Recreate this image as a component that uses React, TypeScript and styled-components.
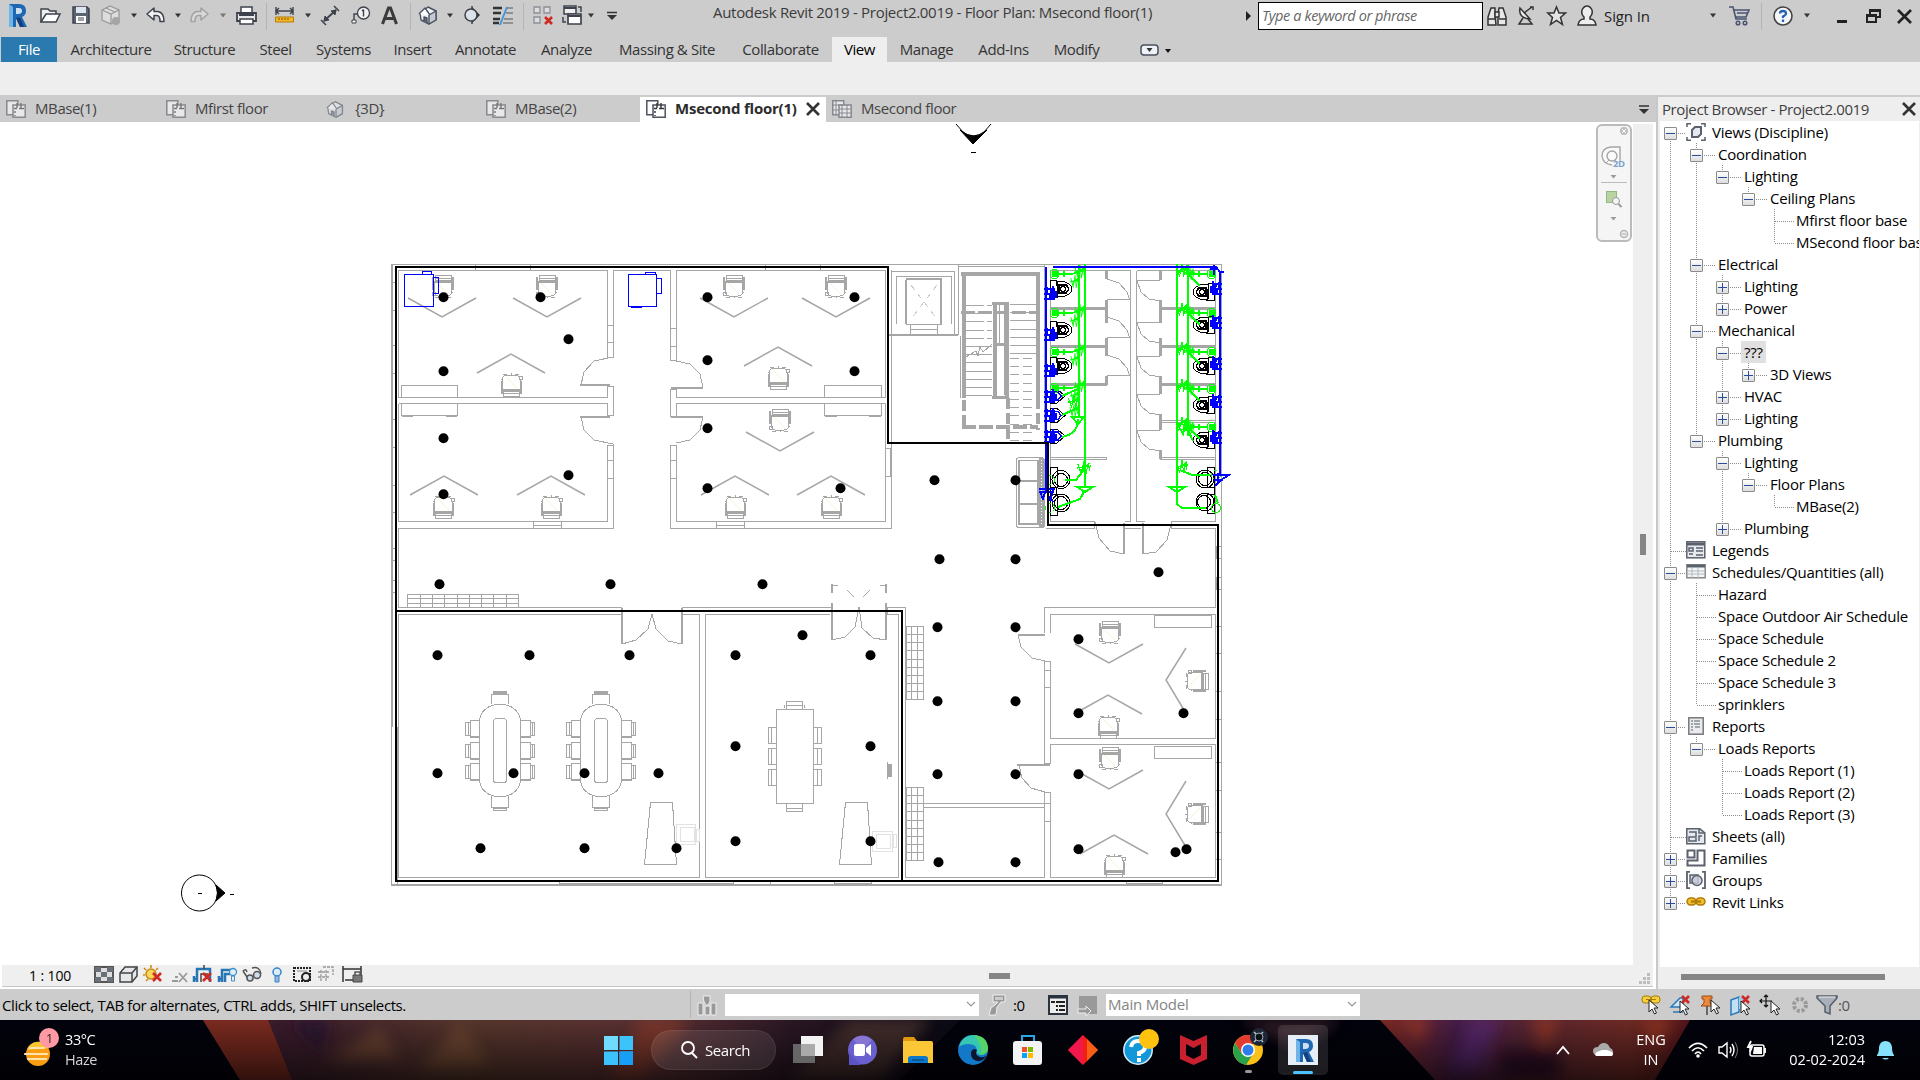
import React from "react";
import styled, { createGlobalStyle } from "styled-components";

const Global = createGlobalStyle`
  * { box-sizing: border-box; }
  html, body { margin: 0; padding: 0; overflow: hidden; }
  body { font-family: "Open Sans", "Noto Sans", sans-serif; font-size: 15px; letter-spacing: -0.4px; color: #333; }
  svg { display: block; flex: none; }
`;

/* ---------- layout ---------- */
const Screen = styled.div`
  width: 1920px; height: 1080px; display: flex; flex-direction: column; overflow: hidden; background: #fff;
`;
const TitleBar = styled.header`
  height: 37px; flex: none; background: #ccc; display: flex; align-items: flex-start; padding: 3px 0 0 8px;
`;
const Slot = styled.span<{ $g?: number }>`
  display: flex; flex: none; margin-left: ${(p) => p.$g || 0}px;
`;
const Sep = styled.i<{ $g?: number }>`
  flex: none; width: 1px; height: 27px; background: #b4b4b4; margin-left: ${(p) => p.$g || 0}px;
`;
const Title = styled.div`
  width: 440px; margin: -1px 0 0 96px; line-height: 20px; white-space: nowrap; flex: none; color: #3b3b3b;
  letter-spacing: -0.3px;
`;
const Search = styled.div`
  width: 225px; height: 28px; margin: -1px 0 0 7px; border: 1px solid #000; background: #fff; padding-left: 3px;
  font-style: italic; line-height: 26px; color: #666; flex: none; font-size: 14.5px;
`;
const SignIn = styled.div`
  width: 46px; margin-left: 7px; line-height: 27px; white-space: nowrap; color: #222; flex: none; letter-spacing: -0.1px;
`;
const RibbonTabs = styled.nav`
  height: 25px; flex: none; background: #ccc; display: flex; padding-left: 1px;
`;
const RibbonTab = styled.div<{ $w: number; $kind?: "file" | "on" }>`
  width: ${(p) => p.$w}px; flex: none; text-align: center; line-height: 24px; white-space: nowrap;
  margin-right: ${(p) => (p.$kind === "file" ? 2 : 0)}px;
  background: ${(p) => (p.$kind === "file" ? "#2a7ab0" : p.$kind === "on" ? "#eee" : "none")};
  color: ${(p) => (p.$kind === "file" ? "#fff" : p.$kind === "on" ? "#000" : "#333")};
`;
const RibbonPanel = styled.div`height: 33px; flex: none; background: #eee;`;
const Work = styled.div`height: 894px; flex: none; display: flex;`;
const Left = styled.main`width: 1656px; flex: none; display: flex; flex-direction: column;`;
const DocTabs = styled.div`height: 27px; flex: none; background: #ccc; display: flex; padding-top: 2px;`;
const DocTab = styled.div<{ $w: number; $on?: boolean }>`
  width: ${(p) => p.$w}px; flex: none; display: flex; align-items: center; padding: 0 6px 2px; gap: 9px; line-height: 23px;
  background: ${(p) => (p.$on ? "#fff" : "none")}; font-weight: ${(p) => (p.$on ? 700 : 400)}; white-space: nowrap;
  color: ${(p) => (p.$on ? "#2c2c2c" : "#444")};
  letter-spacing: ${(p) => (p.$on ? -0.22 : -0.4)}px;
`;
const Spacer = styled.div`flex: 1;`;
const CanvasRow = styled.div`height: 843px; flex: none; display: flex;`;
const Sheet = styled.div`width: 1633px; flex: none; background: #fff;`;
const VTrack = styled.div`width: 20px; flex: none; margin-top: 2px; background: #efefef; padding: 410px 0 0 7px;`;
const VThumb = styled.div`width: 6px; height: 21px; background: #858585;`;
const ViewBar = styled.div`
  height: 22px; margin: 0 3px 0 2px; flex: none; background: #efefef; border-bottom: 1px solid #c6c6c6; display: flex;
  color: #000; line-height: 21px; padding-left: 27px;
`;
const Scale = styled.div`width: 65px; flex: none; font-size: 14px; white-space: nowrap; letter-spacing: -0.1px;`;
const HThumb = styled.div<{ $w: number; $x: number; $y: number }>`
  width: ${(p) => p.$w}px; height: 6px; background: #858585; margin: ${(p) => p.$y}px 0 0 ${(p) => p.$x}px; flex: none;
`;
const Browser = styled.aside`
  width: 264px; flex: none; display: flex; flex-direction: column; border-left: 2px solid #c8c8c8; background: #eee;
`;
const BrowserHead = styled.div`
  height: 26px; flex: none; border-top: 2px solid #ccc; display: flex; justify-content: space-between; align-items: center;
  padding: 0 4px 1px 4px; color: #3f3f3f;
`;
const Tree = styled.div`
  height: 846px; flex: none; margin: 0 1px 0 2px; background: #fff; padding-left: 4px; overflow: hidden;
  color: #000; letter-spacing: -0.22px;
`;
const TreeRow = styled.div`height: 22px; display: flex; align-items: center; white-space: nowrap;`;
const Guide = styled.span<{ $line?: "full" | "top" | "bottom" | "none" }>`
  width: 26px; height: 22px; flex: none; display: flex; align-items: center; margin-right: 0;
  background: repeating-linear-gradient(to bottom, #8c8c8c 0 1px, transparent 1px 2px) no-repeat;
  background-size: ${(p) => (p.$line === "none" ? "0 0" : p.$line === "full" ? "1px 22px" : "1px 12px")};
  background-position: 6px ${(p) => (p.$line === "bottom" ? "10px" : "0")};
`;
const Box = styled.span`
  width: 13px; height: 13px; flex: none; margin-top: 2px; border: 1px solid #8b8b8b; border-radius: 1px;
  background: linear-gradient(#fff, #ddd);
`;
const Dots = styled.span<{ $w: number; $g: number }>`
  width: ${(p) => p.$w}px; height: 1px; margin: 2px 0 0 ${(p) => p.$g}px; flex: none;
  background: repeating-linear-gradient(to right, #8c8c8c 0 1px, transparent 1px 2px);
`;
const TreeText = styled.span<{ $sel?: boolean; $icon?: boolean }>`
  line-height: 22px; padding: 0 3px; background: ${(p) => (p.$sel ? "#e0e0e0" : "none")};
  margin-left: ${(p) => (p.$icon ? 3 : -1)}px;
`;
const StatusBar = styled.div`
  height: 31px; flex: none; background: #ccc; display: flex; align-items: center; padding-left: 2px; color: #000;
`;
const Hint = styled.div`width: 688px; flex: none; white-space: nowrap;`;
const Combo = styled.div<{ $g: number }>`
  width: 254px; height: 22px; margin-left: ${(p) => p.$g}px; background: #fff; color: #858585; flex: none;
  display: flex; align-items: center; justify-content: space-between; padding: 0 3px 1px 2px; line-height: 20px;
  letter-spacing: -0.2px;
`;
const Num = styled.span<{ $g: number; $w: number; $c?: string }>`
  margin-left: ${(p) => p.$g}px; width: ${(p) => p.$w}px; flex: none; color: ${(p) => p.$c || "#000"}; padding-top: 1px;
`;
const TaskBar = styled.footer`height: 60px; flex: none; display: grid; background: #03030c; overflow: hidden;`;
const Wall = styled.div`grid-area: 1 / 1;`;
const Tasks = styled.div`
  grid-area: 1 / 1; display: flex; align-items: center; padding-left: 24px; z-index: 1; color: #fff;
`;
const Two = styled.div<{ $g: number; $w: number; $a: string }>`
  width: ${(p) => p.$w}px; margin-left: ${(p) => p.$g}px; text-align: ${(p) => p.$a}; line-height: 20px; flex: none;
  font-size: 14.5px; white-space: nowrap; letter-spacing: ${(p) => (p.$a === "left" ? -0.4 : 0)}px;
`;
const Dim = styled.div`color: #d5d5d5;`;
const Pill = styled.div`
  width: 125px; height: 40px; border-radius: 20px; margin-left: 18px; background: rgba(255,255,255,.09);
  border: 1px solid rgba(255,255,255,.07); display: flex; align-items: center; padding-left: 28px; gap: 7px; flex: none;
`;
const ActiveApp = styled.div`
  width: 50px; height: 50px; margin-left: 15px; border-radius: 5px; background: rgba(255,255,255,.11);
  display: flex; justify-content: center; align-items: flex-start; flex: none;
`;

/* ---------- icons ---------- */
const Pic = ({ w, h = 24, g, children }: { w: number; h?: number; g?: number; children: React.ReactNode }) => (
  <Slot $g={g}>
    <svg width={w} height={h} viewBox={`0 0 ${w} ${h}`} fill="none" overflow="visible">{children}</svg>
  </Slot>
);
const Caret = ({ g, c = "#333" }: { g?: number; c?: string }) => (
  <Pic w={6} g={g}><path d="M0 10.500h6l-3 4z" fill={c} /></Pic>
);
const RLogo = () => (
  <>
    <path d="M1 1h10q7 0 7 7q0 4-4 6l5 10h-7l-4-9v9H1z" fill="#1f66b3" />
    <path d="M1 1l4 3v20H1z" fill="#6fb4e6" />
    <path d="M8 5h3q3 0 3 3t-4 3H8z" fill="#cfdff0" />
    <path d="M8 15l4 9h4l-4-10z" fill="#12407d" />
  </>
);
const Cross = ({ s = 14, w = 2.6, c = "#333" }: { s?: number; w?: number; c?: string }) => (
  <svg width={s} height={s} viewBox="0 0 14 14"><path d="M1 1l12 12M13 1L1 13" stroke={c} strokeWidth={w} /></svg>
);
const House = ({ o = 1 }: { o?: number }) => (
  <g opacity={o} stroke="#4a5260" strokeWidth="1.4" strokeLinejoin="round">
    <path d="M1 10l8-6 8 4v9l-7 4-8-4z" fill="#eef0f4" /><path d="M10 12l7-4v9l-7 4z" fill="#c4c9d2" />
    <path d="M0 11l6-6 5 7" fill="#fff" /><path d="M5 19v-5l3 1v5" fill="#667" />
  </g>
);
const DocIcon = ({ on, grid }: { on?: boolean; grid?: boolean }) => (
  <svg width="20" height="18" viewBox="0 0 20 18" fill="none" opacity={on ? 1 : 0.55}>
    <path d="M.8.800h11v14H.8z" fill="#fff" stroke="#4d5360" strokeWidth="1.500" />
    <path d="M7 5h12.200v12.200H7z" fill="#fff" stroke="#4d5360" strokeWidth="1.500" />
    {grid
      ? <path d="M4 1v13M1 5h11M1 10h6M10 5v12M15 5v12M7 9h12M7 13h12" stroke="#4d5360" />
      : <path d="M11 3v5M15 3v5M8 8.500h3M13 8.500h5M9 11v2M9 15v1" stroke="#333" strokeWidth="1.400" />}
  </svg>
);
const RedX = ({ x, y, s = 7 }: { x: number; y: number; s?: number }) => (
  <path d={`M${x} ${y}l${s} ${s}M${x + s} ${y}l${-s} ${s}`} stroke="#cf2a22" strokeWidth="2.600" />
);
const Arrow = ({ x = 0, y = 0 }) => (
  <path transform={`translate(${x} ${y})`} d="M0 0v12l3-3 2.500 5 2-1-2.500-5h4z" fill="#fff" stroke="#222" />
);
const Chevron = ({ c = "#999" }) => <svg width="10" height="7"><path d="M1 1l4 4 4-4" stroke={c} fill="none" strokeWidth="1.200" /></svg>;

/* ---------- floor plan ---------- */
const G = "#a6a6a6";
const dots = "443,297 540,297 568,339 443,371 443,438 568,475 443,494 707,297 854,297 707,360 854,371 707,428 707,488 840,488 439,584 610,584 762,584 934,480 1015,480 939,559 1015,559 1158,572 437,655 529,655 629,655 802,635 735,655 870,655 437,773 513,773 584,773 658,773 735,746 870,746 480,848 584,848 676,848 735,841 870,841 937,627 1015,627 937,701 1015,701 937,774 1015,774 938,862 1015,862 1078,639 1078,713 1183,713 1078,774 1078,849 1175,852 1186,849"
  .split(" ").map((s) => s.split(",").map(Number));
const chairs: [number, number, number][] = [
  [443, 286, 0], [547, 286, 0], [734, 286, 0], [836, 286, 0], [780, 420, 0],
  [511, 385, 180], [778, 378, 180], [443, 507, 180], [551, 507, 180], [735, 507, 180], [831, 507, 180],
  [1110, 632, 0], [1108, 727, 180], [1197, 681, 90], [1110, 758, 0], [1114, 866, 180], [1197, 814, 90],
];
const vees: [number, number, number][] = [
  [442, 317, -19], [547, 317, -19], [734, 317, -19], [836, 317, -19], [780, 451, -19],
  [511, 354, 19], [778, 347, 19], [444, 476, 19], [551, 476, 19], [735, 476, 19], [831, 476, 19],
  [1109, 663, -19], [1108, 695, 19], [1109, 789, -19], [1114, 835, 19],
];
const range = (n: number) => Array.from({ length: n }, (_, i) => i);
const Chair = () => (
  <g>
    <path d="M-8-11H8V-4H-8z M-8-8H8M-8-6H8" /><path d="M-9-5H8.500V6Q8 10 4 10H-5Q-9 9-9 5z" />
    <path d="M-10-9V4M9.500-9V4" strokeWidth="2" /><path d="M-11 6h3v3h-3zM8 6h2M0 10v2M-8 11h4M4 11h4" />
    <path d="M-6-3L5 8" stroke="#f5f3cf" />
  </g>
);
const Meeting = ({ x }: { x: number }) => (
  <g transform={`translate(${x} 0)`}>
    <rect x="-20.500" y="704.500" width="41" height="92" rx="19" ry="17" />
    <rect x="-6.500" y="718.500" width="13" height="64" rx="3" />
    {[721, 743, 764].map((y) => (
      <g key={y}>
        <path d={`M-20 ${y - .5}H-30V${y + 16.5}H-20M-30 ${y + 1.5}H-34.500V${y + 14.5}H-30M-32 ${y + 1}v14`} />
        <path d={`M20 ${y - .5}H30V${y + 16.5}H20M30 ${y + 1.5}H34.500V${y + 14.5}H30M32 ${y + 1}v14`} />
        <path d={`M-30 ${y + 16}H-20M20 ${y + 16}H30`} strokeWidth="2" />
      </g>
    ))}
    <path d="M-8.500 704V694.500H8.500V704M-6.500 694V691.500H6.500V694M-8.500 796V807.500H8.500V796M-6.500 807V810.500H6.500V807" />
    <path d="M-7 693H7M-7 808H7" strokeWidth="2" />
  </g>
);
const Toilet = ({ x, y, flip }: { x: number; y: number; flip?: boolean }) => (
  <g transform={`translate(${x} ${y}) scale(${flip ? -1 : 1} 1)`} stroke="#000" fill="none">
    <path d="M.5-8.500H6.500L8 8.500H.5z" /><path d="M7-7Q14-9 19-5Q25 0 19 5Q14 9 7 7z" />
    <path d="M9-4H16Q21 0 16 4H9z" strokeWidth="1.600" /><circle cx="13" cy="0" r="2.500" strokeWidth="1.500" />
  </g>
);
const Valve = ({ x, y, flip }: { x: number; y: number; flip?: boolean }) => (
  <g transform={`translate(${x} ${y}) scale(${flip ? -1 : 1} 1)`} stroke="#00f">
    <path d="M-6-4H0M-6 1H1M-6 6H1" strokeWidth="1.200" />
    <path d="M0-5H4V-2H6V4H4V6H-1V2H1V-2H0z" fill="#00f" />
    <path d="M-3-6V2M3-7V7" strokeWidth="1.200" />
  </g>
);
const Spike = ({ x, y, k = 1 }: { x: number; y: number; k?: number }) => (
  <path transform={`translate(${x} ${y}) scale(${k} 1)`}
    d="M-7-4L-3 5L0-7L2 6L5-5L6 3M-8 0L8-2M-5 3L6-5" stroke="#0f0" strokeWidth="1.300" />
);
const Walls = () => (
  <>
    <path strokeWidth="2" d="M392 264V727M391 885H1222" />
    <path d="M391.500 264.500H1221.500V885M391.500 264V885M397.500 727V885
      M607.500 357V270.500H398.500V397.500H607.500V386M398.500 403.500V521.500H607.500V445M398.500 403.500H607.500V415
      M613.500 357V270.500H670.500V360M613.500 386V415.500H607M613.500 444V528.500H398.500V607.500H621.500M607 357.500H614M607 386H614M607 445H614
      M676.500 360V270.500H885.500V397.500H676.500V389M676.500 416V403.500H885.500V521.500H676.500V445M670.500 389V416H677M670 360.500H677M670 389H677
      M670.500 445V528.500H891.500V270M670 445H677
      M682.500 607.500H830.500M887 607.500H905.500V877.500H1044.500V792M621.500 614.500H398.500V877.500H699.500V614.500H682.500V607M621.500 607V615
      M830 614.500H705.500V877.500H898.500V614.500H887.500V607M1044.500 633V607.500H1215.500V528.500H1171M1050.500 633V614.500H1215.500V738.500H1050.500V661M1044.500 661V763
      M1050.500 763V744.500H1215.500V877.500H1050.500V792M1044 661.500H1051M1044 792.500H1051M1044 763.500H1051M924 803.500H1044M924 807.500H1044
      M1050.500 270.500H1130.500V521.500H1125M1050.500 270V521.500H1094V528.500H1046M1136.500 270.500H1215.500V521.500H1171V528M1136.500 270.500V521.500H1145M1124 528.500H1141" />
    <path d="M475.500 265V270M530.500 265V270M765.500 265V270M820.500 265V270M607.500 325.500h6v17h-6zM607.500 460.500h6v18h-6zM670.500 328.500h6v18h-6zM670.500 460.500h6v18h-6z
      M533.500 521v7M561.500 521v7M533 525.500h28M716.500 521v7M744.500 521v7M716 525.500h28M885.500 448.500h5v28h-5zM1044.500 670.500h6v17h-6zM1044.500 803.500h6v18h-6z
      M391 282.500h4M391 310.500h4M391 345.500h4M391 373.500h4M391 419.500h4M391 447.500h4M391 485.500h4M391 512.500h4M391 548.500h4M391 560.500h4M391 580.500h4M391 592.500h4
      M559.500 880v5M733.500 880v5M770.500 880v5M834.500 880v5M871.500 880v5M1126.500 880v5M1162.500 880v5M834 883.500h37M1126 883.500h36M560 883.500H733
      M1216 546.500h5v12h-5zM1216 577.500h5v12h-5zM1216 626.500h5M1216 653.500h5M1216 691.500h5M1216 719.500h5M1216 762.500h5M1216 790.500h5M1216 832.500h5M1216 859.500h5" />
    <path d="M580 385H610M580 417H610M671 388H703M671 417H703M622 608V644M682 608V644M832 603V640M886 603V640M832 584V593M886 584V593
      M1018 635H1045M1017 765H1050M1124 523V554M1143 523V554" strokeWidth="2" />
    <path d="M613 357L594 361L584 372L581 385M581 417L584 430L594 440L613 444M676 361L690 364L700 374L703 388M703 417L700 430L690 440L676 443
      M622 644L636 640L648 629L652 614L656 629L668 641L682 644M832 640L845 637L855 627L859 607L862 628L873 638L886 640M832 585H838M886 585H880M847 590L854 597M870 590L863 597
      M1018 635L1021 647L1032 658L1045 661M1019 765L1022 778L1031 788L1045 792M1095 522L1099 538L1110 551L1124 554M1171 524L1167 540L1156 552L1143 554" />
  </>
);
const Stairs = () => (
  <>
    <path d="M891.500 271V335H954.500V271.500H891.500M896.500 324V276.500H951.500V324M906.500 279.500h35v45h-35zM910 324v10M937 324v10M910 329.500h27M958.500 265V335M960.500 336V398M1044.500 265V443M958 266.500H1044" />
    <path d="M887 335H958M906 280V324M941 280V324M906 279H942" strokeWidth="2" />
    <path d="M911 285L937 319M937 285L911 319" strokeDasharray="6 5" stroke="#ccc" />
    <path d="M963.500 272V398M961 274H1040M1037.500 272V398" strokeWidth="4" />
    <path d="M963.500 400V430M1037.500 398V430M1007.500 398V442" strokeWidth="4" strokeDasharray="11 4" />
    <path d="M961 312.500H1039M962 427H1038" strokeWidth="3.500" strokeDasharray="14 3" />
    <path d="M994.500 302V398M1006.500 302V398" strokeWidth="4" /><path d="M992 303H1009M992 397H1009M996 344H1004" strokeWidth="3" />
    <path d="M999.500 305V343M1004.500 305V395" />
    {range(12).map((i) => <path key={i} d={`M966 ${305.5 + i * 8.2}H992`} strokeDasharray={i < 5 ? "18 3" : undefined} />)}
    {range(7).map((i) => <path key={i} d={`M1010 ${304.5 + i * 8.2}H1036`} />)}
    {range(11).map((i) => <path key={i} d={`M1010 ${358.5 + i * 8.2}H1036`} strokeDasharray="9 4" />)}
    <path d="M966 357L976 351L978 356L980 347L983 352L992 344" />
    <rect x="1016.500" y="457.500" width="28" height="70" rx="3" /><path d="M1019 460.500H1038V524H1019zM1019 481H1038M1019 504H1038" strokeWidth="1.500" />
    <path d="M1041 458V527" strokeWidth="5" /><path d="M1041.500 460V526" stroke="#fff" strokeDasharray="1 2" />
  </>
);
const Washrooms = () => (
  <>
    <path d="M1050 308.500H1107M1050 346.500H1107M1050 384.500H1107M1106.500 271V279M1106.500 300V323M1106.500 338V356M1106.500 376V385
      M1160 308.500H1215M1160 346.500H1215M1160 384.500H1215M1160 271V280M1160 300V323M1160 338V356M1160 376V394M1160 414V430M1160 450V459" strokeWidth="3" />
    <path d="M1050 457.500H1106.500V459.500H1050M1160 457.500H1215M1160 459.500H1215M1160 420.500H1215M1160 422.500H1215
      M1107 299.500H1130M1107 337.500H1130M1107 375.500H1130M1136 280.500H1160M1136 322.500H1160M1136 356.500H1160M1136 394.500H1160M1136 430.500H1160" />
    {[279, 317, 355].map((y) => <path key={y} d={`M1107 ${y}L1119 ${y + 4}L1127 ${y + 13}L1129.500 ${y + 21}`} />)}
    {[281, 323, 357, 395, 431].map((y) => <path key={y} d={`M1137 ${y}L1141 ${y + 11}L1149 ${y + 18}L1160 ${y + 20}`} />)}
    {[289, 330, 366].map((y) => <Toilet key={y} x={1050} y={y} />)}
    {[292, 325, 366, 405, 440].map((y) => <Toilet key={y} x={1215} y={y} flip />)}
    <g stroke="#000" fill="none">
      {[396, 415.500, 436].map((y) => (
        <g key={y} transform={`translate(0 ${y})`}><path d="M1050.500-7H1057L1065 0L1057 7H1050.500z" /><path d="M1053-4H1058L1061 0L1058 4H1053z" stroke="#00f" strokeWidth="1.500" /></g>
      ))}
      <path d="M1050.500 467.500h7v20h-7zM1050.500 494.500h7v21h-7zM1050.500 487v7M1056.500 487v7M1207.500 467.500h7v20h-7zM1207.500 494.500h7v19h-7zM1214.500 487v7" />
      <circle cx="1061" cy="479.500" r="9" /><circle cx="1061" cy="480" r="6.500" /><circle cx="1061" cy="503" r="9" /><circle cx="1061" cy="503" r="6.500" />
      <circle cx="1205" cy="479" r="9" /><circle cx="1205" cy="479" r="6.500" /><circle cx="1205" cy="502" r="9" /><circle cx="1204" cy="502" r="6.500" />
    </g>
    <g stroke="#0f0" fill="none">
      <path strokeWidth="2" d="M1085 264V487M1078.500 265V418M1177 264V505M1188 265V434" />
      {[274, 313, 352, 388].map((y) => (
        <g key={y}><circle cx="1054.500" cy={y} r="4.500" /><rect x="1052" y={y - 2.5} width="5" height="5" fill="#0f0" />
          <path d={`M1059 ${y}H1072L1085 ${y - 4}M1064 ${y - 3}v6`} strokeWidth="1.500" />
          <Spike x={1080} y={y - 2} k={.7} /><Spike x={1075} y={y + 8} k={.6} /></g>
      ))}
      {[274, 313, 352, 389, 427].map((y) => (
        <g key={y}><circle cx="1211.500" cy={y} r="4.500" /><rect x="1209" y={y - 2.5} width="5" height="5" fill="#0f0" />
          <path d={`M1207 ${y}H1190L1177 ${y - 4}M1188 ${y}L1200 ${y + 12}M1199 ${y - 3}v6`} strokeWidth="1.500" />
          <Spike x={1182} y={y - 3} k={.8} /><Spike x={1190} y={y} k={.6} /></g>
      ))}
      <path strokeWidth="2" d="M1062 396L1078 389M1062 415L1078 408M1062 437Q1078 434 1078 419M1072 417H1084L1078 424zM1065 480H1076L1085 468M1058 507L1080 499L1085 490M1077 487H1093L1085 492zM1169 487H1185L1177 492zM1177 504L1182 508H1206M1180 470L1192 475H1210M1188 430L1193 441" />
      <Spike x={1074} y={402} k={.8} /><Spike x={1074} y={411} k={.6} /><Spike x={1084} y={468} k={.9} /><Spike x={1182} y={467} k={.8} /><Spike x={1186} y={430} />
      <circle cx="1050" cy="480" r="4.500" strokeDasharray="4 2" /><circle cx="1050" cy="508" r="4.500" strokeDasharray="4 2" />
      <circle cx="1216" cy="475" r="4.500" strokeDasharray="4 2" /><circle cx="1216" cy="508" r="4.500" /><path d="M1215 495l3 8" strokeWidth="2" />
    </g>
    <g stroke="#00f" fill="none">
      <path strokeWidth="2" d="M1046 267V490M1053 267H1216L1220 272V475" />
      {[293, 334, 370, 396, 415, 436].map((y) => <Valve key={y} x={1050} y={y} />)}
      {[288, 322, 363, 401, 437].map((y) => <Valve key={y} x={1216} y={y} flip />)}
      <path d="M1039 489H1054L1050 500L1046 489L1043 499L1040 492H1052M1048 495L1053 502" strokeWidth="1.800" />
      <path d="M1213 475H1229L1221 480L1215 486M1218 473V484M1214 480H1223" strokeWidth="1.800" />
      <path d="M1214 265v10M1210 269h8M1221 272h3" strokeWidth="1.500" />
    </g>
  </>
);
const Furniture = () => (
  <>
    <path d="M401.500 397V385.500H457.500V397M401.500 403V415.500H457.500V403M824.500 397V385.500H881.500V397M824.500 403V415.500H881.500V403M1154.500 615.500h57v12h-57zM1154.500 746.500h57v12h-57z" />
    <path d="M402 416H413M446 416H457M825 416H837M869 416H881" />
    <path d="M407.500 594.500h111v13h-111zM407 598.500h111M407 603.500h111" />
    {[420.5, 432.5, 444.5, 457.5, 469.5, 481.5, 493.5, 506.5].map((x) => <path key={x} d={`M${x} 594v13`} />)}
    {[626.5, 787.5].map((y) => (
      <g key={y}><path d={`M906.500 ${y}v73M911.500 ${y}v73M917.500 ${y}v73M923.500 ${y}v73`} />
        {range(10).map((i) => <path key={i} d={`M906 ${Math.round(i * 8.15) + y}h18`} />)}</g>
    ))}
    {chairs.map(([x, y, r], i) => <g key={i} transform={`translate(${x} ${y}) rotate(${r})`}><Chair /></g>)}
    <g strokeWidth="1.500" shapeRendering="auto">
      {vees.map(([x, y, d], i) => <path key={i} d={`M${x - 34} ${y + d}L${x} ${y}L${x + 34} ${y + d}`} />)}
      <path d="M1186 648L1166 680L1184 710M1186 781L1166 814L1186 847" />
    </g>
    <Meeting x={500} /><Meeting x={601} />
    <path d="M776.500 709.500h37v94h-37zM786.500 709V701.500H802.500V709M784 708v-3M804 708v-3M786 705h17M786.500 803V811.500H802.500V803M786 808h17" />
    {[727.5, 748.5, 769.5].map((y) => <path key={y} d={`M776 ${y}H768.500V${y + 16}H776M771.500 ${y}v16M813 ${y}H821.500V${y + 16}H813M817.500 ${y}v16`} />)}
    <path d="M650.500 802.500H672.500L676.500 864.500H644.500zM845.500 802.500H867.500L871.500 864.500H839.500z" />
    <path d="M676.500 824.500h19v20h-19zM680 827h14v14h-14zM696 829v12h3v-12zM872.500 831.500h20v20h-20zM876 834h14v14h-14zM893 834v13h3v-13z" stroke="#e2e2e2" />
    <path d="M889.500 764v13" strokeWidth="4" /><path d="M887.500 762v17" />
  </>
);
const Plan = () => (
  <svg width="1633" height="843" viewBox="0 122 1633 843" fill="none">
    <g stroke={G} shapeRendering="crispEdges"><Walls /><Stairs /><Furniture /></g>
    <g stroke={G} shapeRendering="crispEdges"><Washrooms /></g>
    <g stroke="#00f" shapeRendering="crispEdges">
      <path d="M404.500 274.500h29v32h-29zM422.500 274v-2.500h9v2.500M433.500 277.500h5v16h-5zM628.500 274.500h28v32h-28zM645.500 274v-1.500h10v2M656.500 278.500h5v15h-5zM631 307.500h11" />
    </g>
    <path d="M396 267H888V443H1048V525H1218V881H396zM396 611H902V881" stroke="#000" strokeWidth="2" shapeRendering="crispEdges" />
    {dots.map(([x, y], i) => <circle key={i} cx={x + 0.5} cy={y + 0.3} r={5} fill="#000" />)}
    <g stroke="#000">
      <path d="M956 124L963 132M991 124L984 132M963 132Q973 140 984 132M971 152.500h5" />
      <path d="M960 130L973 144L987 130Q974 142 960 130z" fill="#000" />
      <circle cx="199.500" cy="893" r="18" /><path d="M216 885L225 893L216 901Q219 893 216 885z" fill="#000" /><path d="M198 893.500h4M230 894.500h4" />
    </g>
    <g>
      <rect x="1597" y="125" width="34" height="116" rx="5" fill="#f5f5f5" stroke="#bbb" strokeWidth="2" />
      <circle cx="1624" cy="131" r="4" fill="#bdbdbd" /><path d="M1622 129l4 4M1626 129l-4 4" stroke="#fff" />
      <circle cx="1624" cy="234" r="3.500" fill="#eee" stroke="#b5b5b5" strokeWidth="1.500" /><path d="M1622 234h4" stroke="#aaa" />
      <path d="M1620 162V147H1611Q1602 148 1602 156Q1603 164 1612 165" stroke="#a5a5a5" strokeWidth="1.400" fill="#fafafa" />
      <circle cx="1612" cy="156" r="5" stroke="#a5a5a5" strokeWidth="1.400" /><path d="M1609 160l-3 3M1615 160l2 3" stroke="#a5a5a5" />
      <text x="1613" y="167" fontSize="9.500" fontWeight="700" fill="#7fa3cb" fontFamily="Open Sans">2D</text>
      <path d="M1610.500 175h6l-3 3.500zM1610.500 217h6l-3 3.500z" fill="#999" /><path d="M1601 182.500h26" stroke="#bbb" />
      <rect x="1606.500" y="191.500" width="10" height="11" fill="#b9d3a5" stroke="#93ba7d" /><circle cx="1616" cy="201" r="3.500" fill="#f5f5f5" stroke="#999" /><path d="M1618.500 204l3 3" stroke="#999" strokeWidth="2" />
    </g>
  </svg>
);

/* ---------- project browser ---------- */
type Kind = "views" | "legend" | "sched" | "report" | "sheet" | "family" | "group" | "link";
type Line = "full" | "top" | "bottom" | "none";
type Node = { t: string; lines: string; box?: "+" | "-"; icon?: Kind; sel?: boolean };
const LINE: Record<string, Line> = { f: "full", t: "top", b: "bottom", n: "none" };
/* One letter per indent level: f full guide, t upper half, b lower half, n empty. */
const tree: Node[] = [
  { t: "Views (Discipline)", lines: "b", box: "-", icon: "views" },
  { t: "Coordination", lines: "ff", box: "-" },
  { t: "Lighting", lines: "fft", box: "-" },
  { t: "Ceiling Plans", lines: "ffnt", box: "-" },
  { t: "Mfirst floor base", lines: "ffnnf" },
  { t: "MSecond floor base", lines: "ffnnt" },
  { t: "Electrical", lines: "ff", box: "-" },
  { t: "Lighting", lines: "fff", box: "+" },
  { t: "Power", lines: "fft", box: "+" },
  { t: "Mechanical", lines: "ff", box: "-" },
  { t: "???", lines: "fff", box: "-", sel: true },
  { t: "3D Views", lines: "ffft", box: "+" },
  { t: "HVAC", lines: "fff", box: "+" },
  { t: "Lighting", lines: "fft", box: "+" },
  { t: "Plumbing", lines: "ft", box: "-" },
  { t: "Lighting", lines: "fnf", box: "-" },
  { t: "Floor Plans", lines: "fnft", box: "-" },
  { t: "MBase(2)", lines: "fnfnt" },
  { t: "Plumbing", lines: "fnt", box: "+" },
  { t: "Legends", lines: "f", icon: "legend" },
  { t: "Schedules/Quantities (all)", lines: "f", box: "-", icon: "sched" },
  { t: "Hazard", lines: "ff" },
  { t: "Space Outdoor Air Schedule", lines: "ff" },
  { t: "Space Schedule", lines: "ff" },
  { t: "Space Schedule 2", lines: "ff" },
  { t: "Space Schedule 3", lines: "ff" },
  { t: "sprinklers", lines: "ft" },
  { t: "Reports", lines: "f", box: "-", icon: "report" },
  { t: "Loads Reports", lines: "ft", box: "-" },
  { t: "Loads Report (1)", lines: "fnf" },
  { t: "Loads Report (2)", lines: "fnf" },
  { t: "Loads Report (3)", lines: "fnt" },
  { t: "Sheets (all)", lines: "f", icon: "sheet" },
  { t: "Families", lines: "f", box: "+", icon: "family" },
  { t: "Groups", lines: "f", box: "+", icon: "group" },
  { t: "Revit Links", lines: "t", box: "+", icon: "link" },
];
const TreeIcon = ({ k }: { k: Kind }) => (
  <svg width="20" height="18" viewBox="0 0 20 18" fill="none" stroke="#5b616d" strokeWidth="1.500">
    {k === "views" && <><path d="M1 4V.8h4M15 .8h4V4M1 14v3.200h4M15 17.200h4V14" /><path d="M6 7l3-3h6v7l-3 3H6z" fill="#e5e8ee" strokeWidth="2" /></>}
    {k === "legend" && <><rect x=".8" y=".8" width="18" height="16" fill="#e8eaee" /><path d="M1 3h18" strokeWidth="3" /><path d="M3 7h4v3H3zM3 13h4M10 7h7M10 10h7M10 14h7" /></>}
    {k === "sched" && <><rect x=".8" y="1.800" width="18.400" height="13" fill="#f4f5f7" stroke="#888" /><path d="M1 3h18" strokeWidth="3" /><path d="M1 8h18M1 11h18M6 4v11M12 4v11" stroke="#b5b9c0" strokeWidth="1" /></>}
    {k === "report" && <><rect x="2.800" y=".8" width="14.400" height="16.400" fill="#e9ebef" stroke="#777" /><path d="M5 4h2M8 4h6M5 7h2M8 7h6M5 10h2M5 13h2M9 10h5" strokeWidth="1.200" /></>}
    {k === "sheet" && <><path d="M.8 1.800h13l5 4v11H.8z" fill="#e5e8ee" /><path d="M13 2v4h6M3 5h7v5H3v4h7v-3M13 14V9h3" /></>}
    {k === "family" && <><rect x="1.500" y="1.500" width="7" height="7" fill="#fff" strokeWidth="2" /><path d="M11.500 1.500h7v15h-17v-5h10z" fill="#fff" strokeWidth="2" /></>}
    {k === "group" && <><path d="M4 .8H1v16.400h3M16 .8h3v16.400h-3" strokeWidth="1.800" /><path d="M4 4h8v8H4z" fill="#d9dde5" /><circle cx="11" cy="9.500" r="5" fill="#c5ccd8" fillOpacity=".8" /></>}
    {k === "link" && <g stroke="#b07c08"><rect x="1" y="5" width="9" height="7" rx="3.500" fill="#f2bd2c" /><rect x="10" y="5" width="9" height="7" rx="3.500" fill="#f2bd2c" /><path d="M5 8.500h10" strokeWidth="2.200" /></g>}
  </svg>
);
const Twisty = ({ s }: { s: "+" | "-" }) => (
  <Box><svg width="11" height="11"><path d={s === "+" ? "M1 5.500h9M5.500 1v9" : "M1 5.500h9"} stroke="#2b4c9b" /></svg></Box>
);
const Row = ({ n }: { n: Node }) => {
  const ls = n.lines.split("");
  const last = ls[ls.length - 1];
  return (
    <TreeRow>
      {ls.slice(0, -1).map((l, i) => <Guide key={i} $line={LINE[l]} />)}
      <Guide $line={LINE[last]}>
        {n.box ? <><Twisty s={n.box} /><Dots $w={n.icon ? 8 : 12} $g={1} /></> : <Dots $w={n.icon ? 15 : 19} $g={7} />}
      </Guide>
      {n.icon && <Slot $g={-4}><TreeIcon k={n.icon} /></Slot>}
      <TreeText $sel={n.sel} $icon={!!n.icon}>{n.t}</TreeText>
    </TreeRow>
  );
};

/* ---------- task bar ---------- */
const Wallpaper = () => (
  <svg width="1920" height="60" viewBox="0 0 1920 60">
    <defs>
      <linearGradient id="mid"><stop offset="0" stopColor="#4d2430" /><stop offset=".1" stopColor="#3a1c2c" /><stop offset=".35" stopColor="#56362c" /><stop offset=".6" stopColor="#5a3034" /><stop offset=".78" stopColor="#2a1724" /><stop offset="1" stopColor="#0a0a14" /></linearGradient>
      <linearGradient id="fade" x2="0" y2="1"><stop offset="0" stopColor="#000" stopOpacity="0" /><stop offset="1" stopColor="#000" stopOpacity=".6" /></linearGradient>
      <linearGradient id="red"><stop offset="0" stopColor="#7d2a22" /><stop offset=".25" stopColor="#451d48" /><stop offset=".5" stopColor="#5a2630" /><stop offset=".8" stopColor="#6d2a24" /><stop offset="1" stopColor="#50151c" /></linearGradient>
      <filter id="soft" x="-20%" y="-50%" width="140%" height="200%"><feGaussianBlur stdDeviation="7" /></filter>
    </defs>
    <rect width="1920" height="60" fill="#03030d" />
    <path d="M203 0H960L900 60H240z" fill="url(#mid)" /><path d="M203 0H268L292 60H240z" fill="#7a2b20" />
    <g filter="url(#soft)">
      <path d="M330 40L380 8L400 40zM420 50L460 5L490 45z" fill="#8a5a38" opacity=".5" /><path d="M290 0L330 0L320 35z" fill="#2a1430" />
      <path d="M610 60L640 0H690L640 60z" fill="#8a3a28" opacity=".7" /><path d="M790 60L850 0H930L880 60z" fill="#4c3430" opacity=".8" />
      <path d="M1240 0H1340L1300 30z" fill="#4a2b33" opacity=".7" />
    </g>
    <path d="M1380 0H1690L1655 60H1435z" fill="url(#red)" />
    <g filter="url(#soft)"><path d="M1400 0h30l-10 25zM1530 0h30l-15 30zM1640 0h35l-20 30z" fill="#a33a24" opacity=".7" /><path d="M1470 0h30l-20 50h-30z" fill="#5b2a7a" opacity=".7" /><path d="M1500 30h60v30h-60z" fill="#12081a" opacity=".6" /></g>
    <rect width="1920" height="60" fill="url(#fade)" />
  </svg>
);

const ribbon: [string, number, ("file" | "on")?][] = [
  ["File", 56, "file"], ["Architecture", 104], ["Structure", 83], ["Steel", 59], ["Systems", 77], ["Insert", 61], ["Annotate", 85],
  ["Analyze", 77], ["Massing & Site", 124], ["Collaborate", 103], ["View", 55, "on"], ["Manage", 79], ["Add-Ins", 75], ["Modify", 71],
];

export default function App() {
  const K = "#3d424c";
  return (
    <Screen>
      <Global />
      <TitleBar>
        <Pic w={19}><RLogo /></Pic>
        <Pic w={21} g={13}><path d="M1 19V6h7l2 2h6v3" fill="#eee" stroke={K} strokeWidth="1.500" /><path d="M1 19l5-8h14l-4 8z" fill="#fff" stroke={K} strokeWidth="1.500" /></Pic>
        <Pic w={18} g={11}><path d="M1 4h14l2 2v14H1z" fill="#5b6370" stroke={K} strokeWidth="1.500" /><path d="M4 4h10v6H4z" fill="#dfe5ee" /><path d="M4 13h10v7H4z" fill="#fff" /><path d="M6 15h6M6 17h6" stroke={K} /></Pic>
        <Pic w={20} g={11}><g stroke="#9a9a9a" strokeWidth="1.300" fill="#ddd"><path d="M1 7l8-4 9 4v9l-8 5-9-4z" /><path d="M1 7l9 4 8-4M10 11v10M5 5l9 4" /></g><circle cx="15" cy="18" r="4" fill="#a5a5a5" /></Pic>
        <Caret g={10} />
        <Pic w={19} g={9}><path d="M1 11l7-6v3.500h4q6 1 6 10h-4q0-6-3-6H8V17z" fill="#f3f3f3" stroke={K} strokeWidth="1.500" strokeLinejoin="round" /></Pic>
        <Caret g={10} />
        <Pic w={19} g={9}><path d="M18 11l-7-6v3.500H7q-6 1-6 10h4q0-6 3-6h3V17z" fill="#d8d8d8" stroke="#a2a2a2" strokeWidth="1.500" strokeLinejoin="round" /></Pic>
        <Caret g={11} c="#777" />
        <Pic w={21} g={10}><path d="M5 10V4h11v6" fill="#fff" stroke={K} strokeWidth="1.500" /><path d="M1 10h19v8H1z" fill="#e8e8e8" stroke={K} strokeWidth="1.800" /><path d="M4 16h13v5H4z" fill="#fff" stroke={K} strokeWidth="1.500" /><path d="M3 12h15" stroke={K} strokeWidth="2" /></Pic>
        <Sep $g={9} />
        <Pic w={19} g={8}><path d="M1 8h17M4 5L1 8l3 3M15 5l3 3-3 3M1 4v8M18 4v8" stroke={K} strokeWidth="1.400" /><path d="M.5 14h18v5H.5z" fill="#f5b726" stroke="#b57b0a" /><path d="M4 15v2M7 15v2M10 15v2M13 15v2" stroke="#7a5200" /></Pic>
        <Caret g={11} />
        <Pic w={20} g={9}><path d="M4 18L16 7" stroke={K} strokeWidth="1.800" /><path d="M16 7l-5 1 4 4zM4 18l1-5 4 4z" fill={K} stroke={K} /><path d="M1 17l5 5M14 3l5 5" stroke={K} strokeWidth="1.500" /></Pic>
        <Pic w={19} g={11}><circle cx="12.500" cy="10" r="6" fill="#f2f2f2" stroke={K} strokeWidth="1.300" /><path d="M12.500 6.500v7M11 8l1.500-1.500M7 11H3v6" stroke={K} strokeWidth="1.400" /><path d="M1 17h4v3H1z" fill="#fff" stroke={K} /></Pic>
        <Pic w={17} g={11}><path d="M1.500 21L7.500 5h2L15.500 21M4.500 15.500h8" stroke="#3b3b3b" strokeWidth="3" /></Pic>
        <Sep $g={12} />
        <Pic w={18} g={8}><House /></Pic>
        <Caret g={10} />
        <Pic w={16} g={11}><path d="M8 4l8 8-8 8z" fill="#333" /><path d="M8 3v18" stroke={K} strokeWidth="1.500" /><circle cx="7" cy="12" r="6" fill="#dde2e9" stroke={K} strokeWidth="1.500" /></Pic>
        <Pic w={20} g={13}><path d="M0 5h9M0 10h8M0 16h7M0 20h6" stroke="#333" strokeWidth="2.600" /><path d="M14 5h6M13 10h7M11 16h9M10 20h10" stroke="#555" strokeWidth="1.200" /><path d="M14 4L7 22" stroke="#3c8fd9" strokeWidth="1.800" /></Pic>
        <Sep $g={10} />
        <Pic w={20} g={9}><g fill="#ddd" stroke="#8b8f96" strokeWidth="1.300"><path d="M1 4h6v6H1zM11 4h6v6h-6zM1 14h6v6H1z" /></g><RedX x={12} y={14} /></Pic>
        <Pic w={20} g={9}><path d="M2 3h12v8H2z" fill="#eee" stroke={K} strokeWidth="1.500" /><path d="M6 11h13v10H6z" fill="#fff" stroke={K} strokeWidth="1.700" /><path d="M2 5h12M6 13h13" stroke={K} strokeWidth="2" /><path d="M1 14v5h3M19 9V4h-3" stroke={K} strokeWidth="1.500" /></Pic>
        <Caret g={6} />
        <Pic w={10} g={13}><path d="M0 9.500h10" stroke="#333" strokeWidth="1.500" /><path d="M0 12h10l-5 5z" fill="#333" /></Pic>
        <Title>Autodesk Revit 2019 - Project2.0019 - Floor Plan: Msecond floor(1)</Title>
        <Pic w={5} g={93}><path d="M0 8v10l5-5z" fill="#222" /></Pic>
        <Search>Type a keyword or phrase</Search>
        <Pic w={20} g={4}><g fill="#e8e8e8" stroke="#333" strokeWidth="1.500"><path d="M4 5h4v7l1 10H1v-8zM12 5h4l3 9v8h-8V12z" /><path d="M8 9h4v5H8z" /><path d="M1 16h7M12 16h7" /></g></Pic>
        <Pic w={17} g={11}><path d="M2 5q-2 10 10 11z" fill="#eee" stroke="#333" strokeWidth="1.500" /><path d="M6 10l8-6M12 4h3v3M5 15l-4 6h13l-4-5" stroke="#333" strokeWidth="1.500" /></Pic>
        <Pic w={19} g={12}><path d="M9.500 4l2.500 6h6.500l-5 4.500 2 7-6-4-6 4 2-7L.8 10H7z" fill="#e4e4e4" stroke="#333" strokeWidth="1.500" /></Pic>
        <Pic w={20} g={11}><path d="M1 22q1-6 6-6v-2Q4 11 5 7q2-4 5-4t5 4q1 4-2 7v2q5 0 6 6z" fill="#eee" stroke="#333" strokeWidth="1.500" /></Pic>
        <SignIn>Sign In</SignIn>
        <Caret g={60} />
        <Pic w={21} g={13}><path d="M0 4h4l3 12h11M5 7h15l-3 7H7M8 10h10" stroke="#4a5470" strokeWidth="1.600" /><circle cx="9" cy="20" r="1.800" stroke="#4a5470" strokeWidth="1.500" /><circle cx="16" cy="20" r="1.800" stroke="#4a5470" strokeWidth="1.500" /></Pic>
        <Sep $g={11} />
        <Pic w={20} g={11}><circle cx="10" cy="13" r="9" fill="#f5f7fa" stroke="#444" strokeWidth="1.600" /><path d="M7 10.500Q7 8 10 8t3 2.500q0 1.500-3 3V15M10 16.500V19" stroke="#2663b8" strokeWidth="2.300" /></Pic>
        <Caret g={11} />
        <Pic w={11} g={27}><path d="M0 18.500h10" stroke="#222" strokeWidth="3" /></Pic>
        <Pic w={15} g={18}><path d="M4 11V7h10v7h-4" stroke="#222" strokeWidth="2" /><path d="M1 12h9v7H1z" stroke="#222" strokeWidth="2" /><path d="M4 8h10M1 13h9" stroke="#222" strokeWidth="2" /></Pic>
        <Pic w={15} g={16}><path d="M1 7l13 13M14 7L1 20" stroke="#222" strokeWidth="2.700" /></Pic>
      </TitleBar>
      <RibbonTabs>
        {ribbon.map(([t, w, k]) => <RibbonTab key={t} $w={w} $kind={k}>{t}</RibbonTab>)}
        <Pic w={20} h={25} g={28}><rect x="1" y="8" width="17" height="10" rx="3" fill="#eef1f5" stroke="#4a505c" strokeWidth="1.500" /><path d="M6.500 11h6l-3 4z" fill="#333" /></Pic>
        <Pic w={6} h={25} g={5}><path d="M0 12h6l-3 4z" fill="#111" /></Pic>
      </RibbonTabs>
      <RibbonPanel />
      <Work>
        <Left>
          <DocTabs>
            <DocTab $w={160}><DocIcon />MBase(1)</DocTab>
            <DocTab $w={160}><DocIcon />Mfirst floor</DocTab>
            <DocTab $w={160}><svg width="20" height="22" viewBox="0 0 20 24"><House o={0.55} /></svg>{"{3D}"}</DocTab>
            <DocTab $w={160}><DocIcon />MBase(2)</DocTab>
            <DocTab $w={186} $on><DocIcon on />Msecond floor(1)<Cross /></DocTab>
            <DocTab $w={160}><DocIcon grid />Msecond floor</DocTab>
            <Spacer />
            <Pic w={17}><path d="M0 9h10" stroke="#333" strokeWidth="1.500" /><path d="M0 12h10l-5 5z" fill="#333" /></Pic>
          </DocTabs>
          <CanvasRow>
            <Sheet><Plan /></Sheet>
            <VTrack><VThumb /></VTrack>
          </CanvasRow>
          <ViewBar>
            <Scale>1 : 100</Scale>
            <Pic w={20} h={20}><path d="M1 2h18v15H1z" fill="#ddd" stroke="#555" strokeWidth="2" /><path d="M1 2h6v5H1zM13 2h6v5h-6zM7 7h6v5H7zM1 12h6v5H1zM13 12h6v5h-6z" fill="#6a7078" /></Pic>
            <Pic w={19} h={20} g={5}><path d="M1 8l5-6h12v9l-5 6H1z" fill="#e6e8ec" stroke="#444" strokeWidth="1.500" /><path d="M1 8h12v9M13 8l5-6" stroke="#444" strokeWidth="1.500" /></Pic>
            <Pic w={19} h={20} g={5}><circle cx="8" cy="9" r="5" fill="#fbd65d" stroke="#c98a12" strokeWidth="1.500" /><path d="M8 0v3M1 3l2 2M15 3l-2 2M0 10h2M3 16l2-2" stroke="#c98a12" strokeWidth="1.500" /><RedX x={10} y={8} s={8} /></Pic>
            <Pic w={15} h={20} g={10}><path d="M0 16h6M3 12h3M7 8l8 9M15 8l-8 9" stroke="#999" strokeWidth="1.800" /></Pic>
            <Pic w={20} h={20} g={5}><path d="M5 17V4h13v13M2 11v6M1 14h4" stroke="#2875b5" strokeWidth="2.500" /><path d="M9 17V9h7M12 0v4" stroke="#444" strokeWidth="1.500" /><RedX x={11} y={8} s={8} /></Pic>
            <Pic w={20} h={20} g={5}><path d="M5 17V5h9M2 11v6M1 14h4M8 17V9h5" stroke="#2875b5" strokeWidth="2.500" /><circle cx="16" cy="7" r="3.500" fill="#dff0fb" stroke="#3f8fc9" strokeWidth="1.300" /><path d="M14.500 11h3v5h-3z" stroke="#3f8fc9" /></Pic>
            <Pic w={20} h={20} g={5}><path d="M1 6l6 9M1 6q3-3 4 1M10 3q8-2 9 6" stroke="#555" strokeWidth="1.500" /><circle cx="8" cy="13" r="3" stroke="#555" strokeWidth="1.500" fill="#cde" /><circle cx="15" cy="10" r="3.500" stroke="#555" strokeWidth="1.500" fill="#cde" /></Pic>
            <Pic w={10} h={20} g={10}><circle cx="5" cy="7" r="4" fill="#d8edfb" stroke="#3b82c4" strokeWidth="1.500" /><path d="M3 11h4v6H3z" fill="#8fb9dd" stroke="#3b82c4" /></Pic>
            <Pic w={19} h={20} g={11}><rect x="1" y="3" width="16" height="13" stroke="#222" strokeWidth="2" strokeDasharray="2 1" /><path d="M4 6h10" stroke="#888" /><circle cx="13" cy="12" r="4" fill="#eee" stroke="#222" strokeWidth="2" /></Pic>
            <Pic w={18} h={20} g={5}><path d="M1 7h12M1 12h12M4 5v12M9 5v12M6 2h10v8" stroke="#999" strokeDasharray="3 1" strokeWidth="1.300" /></Pic>
            <Pic w={20} h={20} g={7}><path d="M1 1v16M19 1v9M1 4h18M3 15h8" stroke="#333" strokeWidth="1.500" /><path d="M11 10h9v7h-9z" fill="#777" stroke="#444" /><path d="M13 10V7h5v3" stroke="#555" strokeWidth="1.500" /></Pic>
            <HThumb $w={21} $x={627} $y={8} />
            <Spacer />
            <Pic w={14} h={21}><path d="M8 8h3v3H8zM4 12h3v3H4zM8 12h3v3H8zM0 16h3v3H0zM4 16h3v3H4zM8 16h3v3H8z" fill="#bdbdbd" /></Pic>
          </ViewBar>
        </Left>
        <Browser>
          <BrowserHead>Project Browser - Project2.0019<Cross /></BrowserHead>
          <Tree>{tree.map((n, i) => <Row key={i} n={n} />)}</Tree>
          <HThumb $w={204} $x={23} $y={7} />
        </Browser>
      </Work>
      <StatusBar>
        <Hint>Click to select, TAB for alternates, CTRL adds, SHIFT unselects.</Hint>
        <Sep />
        <Pic w={20} g={6}><path d="M1 10h5v12H1zM8 13h5v9H8zM14 10h5v12h-5zM6 3h7v6l-3 4-3-4z" fill="#999" stroke="#eee" /></Pic>
        <Combo $g={8}><span /><Chevron /></Combo>
        <Pic w={18} g={9}><path d="M5 2h12v7h-4l-4 5-1 8H1l2-7 4-3 3-3H5z" fill="#999" stroke="#eee" /><path d="M7 4h8v3H7z" fill="#ccc" /></Pic>
        <Num $g={7} $w={12}>:0</Num>
        <Pic w={20} g={23}><path d="M1 3h18v18H1z" fill="#eee" stroke="#2b333f" strokeWidth="2" /><path d="M1 4h18" stroke="#2b333f" strokeWidth="3" /><path d="M3 9h4M8 9h9M8 13h2M11 13h6M8 17h2M11 17h6" stroke="#222" strokeWidth="2" /></Pic>
        <Pic w={21} g={9}><path d="M2 3h18v18h-9v-5H2z" fill="#999" /><path d="M1 16h8v-3l5 5-5 5v-3H1z" fill="#999" stroke="#eee" /></Pic>
        <Combo $g={8}>Main Model<Chevron /></Combo>
        <Pic w={20} g={281}><rect x="1" y="3" width="9" height="7" rx="3" fill="#f6cf3e" stroke="#a87b0a" /><rect x="10" y="3" width="9" height="7" rx="3" fill="#f6cf3e" stroke="#a87b0a" /><path d="M5 6.500h10" stroke="#a87b0a" /><Arrow x={8} y={7} /></Pic>
        <Pic w={20} g={9}><path d="M1 14L10 5h3v9zM3 19h10" fill="#cfe6f7" stroke="#2a78b8" strokeWidth="1.500" /><RedX x={12} y={3} /><Arrow x={10} y={8} /></Pic>
        <Pic w={20} g={10}><path d="M2 3h10v3h-2v4l3 3H1l3-3V6H2z" fill="#e98a3c" stroke="#a4480e" /><path d="M7 13v9" stroke="#444" strokeWidth="1.500" /><Arrow x={11} y={7} /></Pic>
        <Pic w={20} g={10}><path d="M1 7l8-3v15l-8 3z" fill="#bfe0f5" stroke="#2a78b8" strokeWidth="1.500" /><path d="M9 4h5v12H9z" fill="#9ecbea" /><RedX x={12} y={3} /><Arrow x={11} y={8} /></Pic>
        <Pic w={20} g={10}><path d="M0 8h12M6 2v12M4 4l2-2 2 2M2 6L0 8l2 2M4 12l2 2 2-2" stroke="#111" strokeWidth="1.200" /><Arrow x={11} y={8} /></Pic>
        <Pic w={18} g={11}><circle cx="9" cy="12" r="6" stroke="#999" strokeWidth="4" strokeDasharray="3 1.700" /></Pic>
        <Pic w={20} g={8}><path d="M0 3h20v2l-7 8v8l-5-2v-6L0 5z" fill="#a8b0ba" stroke="#555d68" strokeWidth="1.500" /><path d="M2 4h16" stroke="#eee" /></Pic>
        <Num $g={1} $w={14} $c="#555">:0</Num>
      </StatusBar>
      <TaskBar>
        <Wall><Wallpaper /></Wall>
        <Tasks>
          <Pic w={36} h={44}>
            <circle cx="14" cy="26" r="12" fill="#fa9d13" /><path d="M3 22A12 12 0 0 1 25 20" fill="#fdc630" />
            <path d="M6 20h14M1 26h22M4 31h18" stroke="#fde3b0" strokeWidth="2.200" strokeLinecap="round" />
            <circle cx="25" cy="10" r="10" fill="#ff99a4" /><text x="22" y="14.500" fontSize="12.500" fill="#222" fontFamily="Open Sans">1</text>
          </Pic>
          <Two $g={5} $w={60} $a="left"><div>33°C</div><Dim>Haze</Dim></Two>
          <Pic w={29} h={29} g={479}><path d="M0 0h14v14H0zM15.500 0h13.500v14H15.500zM0 15.500h14V29H0zM15.500 15.500h13.500V29H15.500z" fill="#3cc3fb" /><path d="M0 0h14v14H0z" fill="#6fdcfe" /><path d="M15.500 15.500h13.500V29H15.500z" fill="#189ef5" /></Pic>
          <Pill><svg width="18" height="18" fill="none"><circle cx="8" cy="7" r="6" stroke="#fff" strokeWidth="1.800" /><path d="M12 12l5 5" stroke="#fff" strokeWidth="2" /></svg>Search</Pill>
          <Pic w={30} h={30} g={17}><path d="M0 9h22v19H0z" fill="#666" /><path d="M8 1h22v20H8z" fill="#f2f2f2" /><path d="M8 9h14v12H8z" fill="#aaa" /></Pic>
          <Pic w={29} h={30} g={25}><circle cx="14.500" cy="15" r="14.500" fill="#6b60cf" /><path d="M1 18v12h12z" fill="#5a54c4" /><path d="M5 4Q14-3 24 5L14 16z" fill="#a58bd8" opacity=".5" /><rect x="6" y="9" width="11" height="12" rx="2" fill="#fff" /><path d="M18 13l5-4v12l-5-4z" fill="#fff" /></Pic>
          <Pic w={30} h={30} g={26}><path d="M0 4q0-2 2-2h9l3 4H0z" fill="#e0980f" /><path d="M0 6h28q2 0 2 2v20H0z" fill="#fbc737" /><path d="M5 28v-4q0-3 3-3h14q3 0 3 3v4z" fill="#0b78c9" /><path d="M9 25h12" stroke="#0a4f8a" strokeWidth="1.500" /></Pic>
          <Pic w={31} h={30} g={25}><circle cx="15" cy="15" r="15" fill="#1478c8" /><path d="M1 12Q4 0 16 0Q29 1 30 13Q30 20 22 20Q17 19 19 15Q18 9 11 9Q4 9 1 12z" fill="#35c6b4" /><path d="M16 0Q29 1 30 13Q30 20 22 20Q26 12 16 0z" fill="#62d84e" opacity=".75" /><path d="M19 15q-3 5 3 7 4 1 7-2-4 7-10 6-7-2-6-9 2-5 6-2z" fill="#0b1530" /></Pic>
          <Pic w={29} h={30} g={24}><path d="M9 7V1h12v6" stroke="#26a8e8" strokeWidth="2" /><rect y="6" width="29" height="24" rx="3" fill="#f3f3f3" /><path d="M9 12h5v5H9z" fill="#f25022" /><path d="M15 12h5v5h-5z" fill="#7fba00" /><path d="M9 18h5v5H9z" fill="#00a4ef" /><path d="M15 18h5v5h-5z" fill="#ffb900" /></Pic>
          <Pic w={30} h={30} g={26}><path d="M15 0l15 15-15 15L0 15z" fill="#f31f12" /><path d="M15 0v30L0 15z" fill="#f21664" opacity=".7" /><path d="M19 4l11 11-11 11z" fill="#fa7a18" opacity=".7" /></Pic>
          <Pic w={36} h={30} g={25}><circle cx="15" cy="15" r="14.200" fill="#1297d8" stroke="#d8eefa" strokeWidth="1.500" /><path d="M8 12Q9 6 15 6t7 6q0 4-6 6v3M16 23v4" stroke="#fff" strokeWidth="4" /><circle cx="26" cy="4" r="10" fill="#ffc20e" /></Pic>
          <Pic w={27} h={30} g={21}><path d="M0 0l13.500 6L27 0v24l-13.500 6L0 24zM6 9v11l7.500 4 7.500-4V9l-7.500 4z" fill="#c8202f" fillRule="evenodd" /></Pic>
          <Pic w={30} h={46} g={26}><g transform="translate(0 8)"><circle cx="15" cy="15" r="15" fill="#fbc116" /><path d="M2 8A15 15 0 0 1 29 9H15L9 19z" fill="#e33b2e" /><path d="M2 8A15 15 0 0 0 13 30L20 19H9z" fill="#2aa24c" /><circle cx="15" cy="15" r="7" fill="#fff" /><circle cx="15" cy="15" r="5.500" fill="#2e7de9" /><circle cx="26" cy="2" r="9" fill="#1d2733" /><path d="M21-3l3 3M30-3l-3 3M21 7l3-3M30 7l-3-3" stroke="#b9c4d0" strokeWidth="1.500" /><circle cx="26" cy="2" r="4" fill="#0c1118" stroke="#9ab" /><rect x="12" y="35" width="7" height="3" rx="1.500" fill="#999" /></g></Pic>
          <ActiveApp><Pic w={30} h={50}><path d="M0 10h30v30H0z" fill="#e6eef8" /><g transform="translate(7 13)"><RLogo /></g><rect x="5" y="46" width="20" height="3" rx="1.500" fill="#4cc2ff" /></Pic></ActiveApp>
          <Pic w={14} h={10} g={228}><path d="M1 9l6-7 6 7" stroke="#fff" strokeWidth="1.800" /></Pic>
          <Pic w={20} h={16} g={23}><path d="M5 14q-5-1-5-5t5-4q2-4 6-4t6 5q3 1 3 4t-3 4z" fill="#aaa" /><path d="M3 14q-2-2 1-4l5-2 5 0 5 2q2 2 0 4z" fill="#fff" /></Pic>
          <Two $g={23} $w={30} $a="center"><div>ENG</div><div>IN</div></Two>
          <Pic w={20} h={16} g={22}><path d="M1 6Q10-3 19 6M4 9Q10 2.500 16 9M7 12Q10 8 13 12" stroke="#fff" strokeWidth="1.700" /><circle cx="10" cy="14" r="1.800" fill="#fff" /></Pic>
          <Pic w={20} h={16} g={10}><path d="M1 5h3l5-4v14l-5-4H1zM12 5q2 3 0 6M14 2q4 6 0 12" stroke="#fff" strokeWidth="1.400" /><path d="M17 0q5 8 0 16" stroke="#777" /></Pic>
          <Pic w={20} h={16} g={9}><rect x="3" y="3" width="14" height="11" rx="2" stroke="#fff" strokeWidth="1.500" /><path d="M7 5h8v7H6z" fill="#fff" /><path d="M18 6v5M4-1L1 5h4L3 10" stroke="#fff" strokeWidth="1.800" /></Pic>
          <Two $g={12} $w={86} $a="right"><div>12:03</div><div>02-02-2024</div></Two>
          <Pic w={17} h={20} g={12}><path d="M0 15q2-2 2-8 1-6 6.500-6T15 7q0 6 2 8v1H0z" fill="#86e2fc" /><path d="M5 18h7q-3 3-7 0z" fill="#86e2fc" /></Pic>
        </Tasks>
      </TaskBar>
    </Screen>
  );
}
